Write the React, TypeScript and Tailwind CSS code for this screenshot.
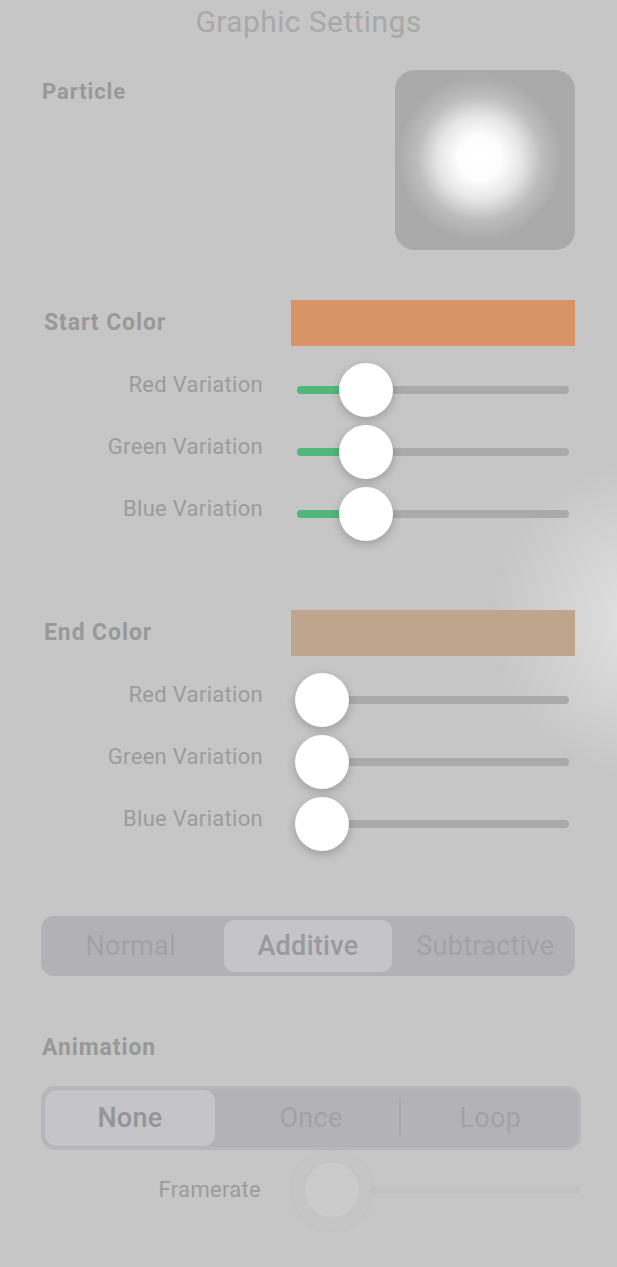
import React from "react";

const font = { fontFamily: "Roboto, 'Noto Sans', sans-serif" };

function Slider({ center, fill }: { center: number; fill: boolean }) {
  const left = center - 297;
  return (
    <div className="relative h-[62px] w-[272px]">
      <div className="absolute left-0 right-0 top-[27px] h-[8px] rounded-full bg-[#aaaaaa]" />
      {fill && (
        <div
          className="absolute left-0 top-[27px] h-[8px] rounded-full bg-[#52b77b]"
          style={{ width: left }}
        />
      )}
      <div
        className="absolute top-[4px] h-[54px] w-[54px] rounded-full bg-white shadow-[0_3px_10px_rgba(0,0,0,0.22)]"
        style={{ left: left - 27 }}
      />
    </div>
  );
}

function SliderRow({ label, center, fill }: { label: string; center: number; fill: boolean }) {
  return (
    <div className="flex h-[62px] items-center">
      <div className="w-[263px] pb-[10px] text-right text-[22px] leading-[26px] tracking-[0.3px] text-[#9c9c9c]">
        {label}
      </div>
      <div className="ml-[34px]">
        <Slider center={center} fill={fill} />
      </div>
    </div>
  );
}

function ColorBlock({ title, color, center, fill }: { title: string; color: string; center: number; fill: boolean }) {
  return (
    <div>
      <div className="flex h-[46px] items-center pl-[44px] pr-[42px]">
        <div className="flex-1 text-[23px] font-bold leading-[26px] tracking-[0.9px] text-[#999999]">{title}</div>
        <div className="h-[46px] w-[284px]" style={{ backgroundColor: color }} />
      </div>
      <div className="mt-[13px]">
        <SliderRow label="Red Variation" center={center} fill={fill} />
        <SliderRow label="Green Variation" center={center} fill={fill} />
        <SliderRow label="Blue Variation" center={center} fill={fill} />
      </div>
    </div>
  );
}

export default function App() {
  return (
    <div
      className="relative h-[1267px] w-[617px] overflow-hidden bg-[#c6c6c6] bg-[radial-gradient(circle_at_650px_620px,#e6e6e6_0px,#dadada_50px,#c6c6c6_160px)]"
      style={font}
    >
      {/* Title */}
      <div className="pt-[4px] text-center text-[30px] leading-[36px] tracking-[0.4px] text-[#a9a9a9]">Graphic Settings</div>

      {/* Particle */}
      <div className="mt-[30px] flex pl-[42px] pr-[42px]">
        <div className="flex-1 pt-[9px] text-[22px] font-bold leading-[26px] tracking-[0.9px] text-[#999999]">Particle</div>
        <div className="h-[180px] w-[180px] rounded-[20px] bg-[#aaaaaa] bg-[radial-gradient(circle_at_47%_49%,#ffffff_0px,#fdfdfd_22px,#e6e6e6_42px,#bdbdbd_62px,#aaaaaa_82px)]" />
      </div>

      {/* Start Color */}
      <div className="mt-[50px]">
        <ColorBlock title="Start Color" color="#d89466" center={366} fill={true} />
      </div>

      {/* End Color */}
      <div className="mt-[65px]">
        <ColorBlock title="End Color" color="#c0a58e" center={322} fill={false} />
      </div>

      {/* Blend mode segmented control */}
      <div className="ml-[41px] mt-[61px] grid h-[60px] w-[534px] grid-cols-3 rounded-[13px] bg-[#b2b2b6] p-[4px]">
        <div className="flex items-center justify-center pr-[4px] text-[27px] tracking-[0.3px] text-[#a2a2a5]">Normal</div>
        <div className="mx-[4px] flex items-center justify-center rounded-[10px] bg-[#c4c4c9] text-[27px] font-medium tracking-[0.3px] text-[#9a9a9d]">
          Additive
        </div>
        <div className="flex items-center justify-center pl-[4px] text-[27px] tracking-[0.3px] text-[#a2a2a5]">Subtractive</div>
      </div>

      {/* Animation */}
      <div className="ml-[42px] mt-[59px] text-[23px] font-bold leading-[26px] tracking-[0.9px] text-[#999999]">Animation</div>

      <div className="ml-[41px] mt-[25px] grid h-[64px] w-[540px] grid-cols-3 rounded-[14px] border-[3px] border-[#b8b8bc] bg-[#b3b3b7] p-[1px]">
        <div className="flex">
          <div className="flex w-[170px] items-center justify-center rounded-[11px] bg-[#c4c4c9] text-[27px] font-medium tracking-[0.3px] text-[#959598]">
            None
          </div>
        </div>
        <div className="flex items-center justify-center text-[27px] tracking-[0.3px] text-[#a2a2a5]">Once</div>
        <div className="relative flex items-center justify-center pl-[4px] text-[27px] tracking-[0.3px] text-[#a2a2a5]">
          <div className="absolute left-[-1px] top-[10px] h-[35px] w-[2px] bg-[#a7a7aa]" />
          Loop
        </div>
      </div>

      {/* Framerate */}
      <div className="mt-[9px] flex h-[62px] items-center">
        <div className="w-[261px] text-right text-[22px] leading-[26px] tracking-[0.3px] text-[#9c9c9c]">Framerate</div>
        <div className="relative ml-[39px] h-[62px] w-[281px]">
          <div className="absolute left-0 right-0 top-[27px] h-[8px] rounded-full bg-[#c2c2c2]" />
          <div className="absolute left-[-8px] top-[-9px] h-[80px] w-[80px] rounded-full bg-[#c5c5c5] shadow-[0_0_6px_rgba(0,0,0,0.03)]" />
          <div className="absolute left-[5px] top-[4px] h-[54px] w-[54px] rounded-full bg-[#cbcbcb]" />
        </div>
      </div>
    </div>
  );
}
